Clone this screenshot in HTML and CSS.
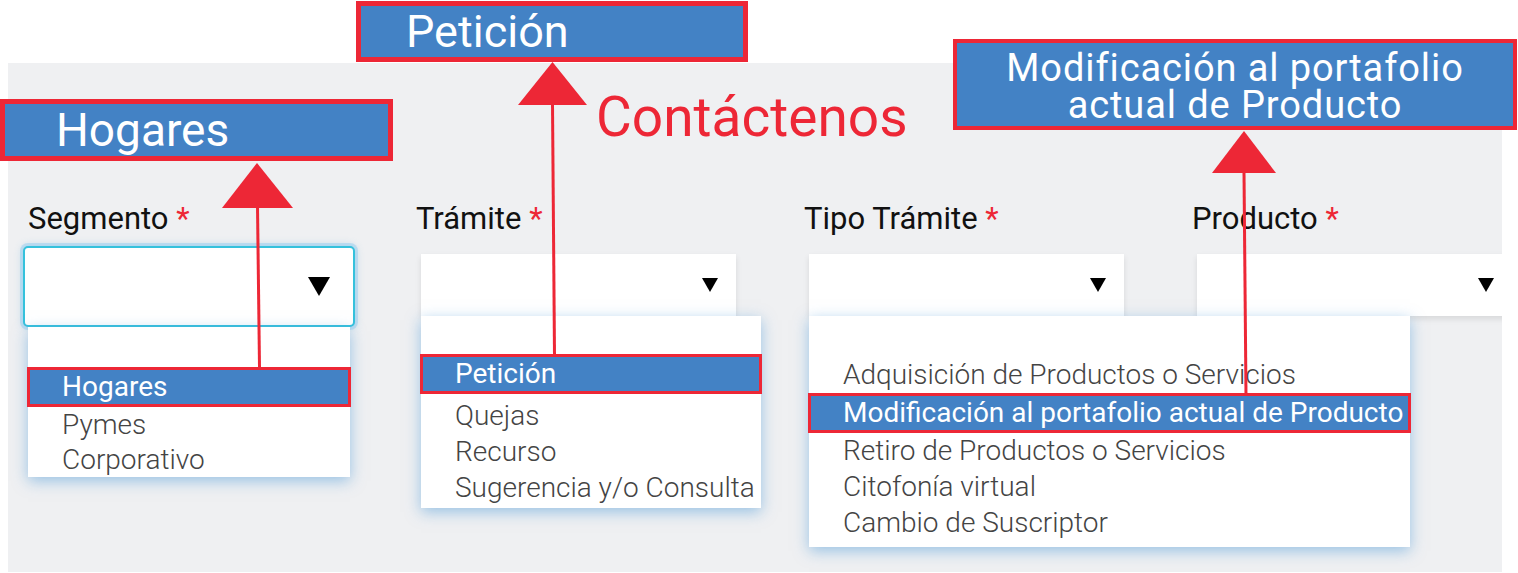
FILE: index.html
```html
<!DOCTYPE html>
<html lang="es">
<head>
<meta charset="utf-8">
<title>Contáctenos</title>
<link rel="stylesheet" href="styles.css">
</head>
<body>
<div class="page">
  <section class="panel">
    <div class="field field--segmento">
      <span class="field__label">Segmento <b class="req">*</b></span>
      <div class="dropdown">
        <div class="select select--focus">
          <svg class="caret caret--lg" viewBox="0 0 22 19"><polygon points="0,0 22,0 11,19"/></svg>
        </div>
        <ul class="menu menu--segmento">
          <li class="menu__item menu__item--active">Hogares</li>
          <li class="menu__item">Pymes</li>
          <li class="menu__item">Corporativo</li>
        </ul>
      </div>
    </div>
    <div class="field field--tramite">
      <span class="field__label">Trámite <b class="req">*</b></span>
      <div class="dropdown">
        <div class="select">
          <svg class="caret" viewBox="0 0 16 14"><polygon points="0,0 16,0 8,14"/></svg>
        </div>
        <ul class="menu menu--tramite">
          <li class="menu__item menu__item--active">Petición</li>
          <li class="menu__item">Quejas</li>
          <li class="menu__item">Recurso</li>
          <li class="menu__item">Sugerencia y/o Consulta</li>
        </ul>
      </div>
    </div>
    <div class="field field--tipo">
      <span class="field__label">Tipo Trámite <b class="req">*</b></span>
      <div class="dropdown">
        <div class="select">
          <svg class="caret" viewBox="0 0 16 14"><polygon points="0,0 16,0 8,14"/></svg>
        </div>
        <ul class="menu menu--tipo">
          <li class="menu__item">Adquisición de Productos o Servicios</li>
          <li class="menu__item menu__item--active">Modificación al portafolio actual de Producto</li>
          <li class="menu__item">Retiro de Productos o Servicios</li>
          <li class="menu__item">Citofonía virtual</li>
          <li class="menu__item">Cambio de Suscriptor</li>
        </ul>
      </div>
    </div>
    <div class="field field--producto">
      <span class="field__label">Producto <b class="req">*</b></span>
      <div class="dropdown">
        <div class="select">
          <svg class="caret" viewBox="0 0 16 14"><polygon points="0,0 16,0 8,14"/></svg>
        </div>
      </div>
    </div>
  </section>

  <div class="callout callout--segmento">Hogares</div>
  <div class="callout callout--tramite">Petición</div>
  <p class="caption">Contáctenos</p>
  <div class="callout callout--tipo">
    <span class="callout__line">Modificación al portafolio</span>
    <span class="callout__line">actual de Producto</span>
  </div>

  <svg class="pointers" width="1518" height="573" viewBox="0 0 1518 573">
    <g fill="#ed2736">
      <polygon points="257,163 222,208 293,208"/>
      <polygon points="552.5,62 518,105 587,105"/>
      <polygon points="1244,131 1212,173 1276,173"/>
    </g>
    <g stroke="#ed2736" stroke-width="3" fill="none">
      <line x1="257.5" y1="206" x2="259.5" y2="367"/>
      <line x1="552.5" y1="104" x2="554.5" y2="355"/>
      <line x1="1244" y1="172" x2="1246" y2="396"/>
    </g>
  </svg>
</div>
</body>
</html>
```

FILE: styles.css
```css
* {
  box-sizing: border-box;
}

html,
body {
  margin: 0;
  padding: 0;
}

body {
  background: #fff;
  font-family: Roboto, "Noto Sans", "Liberation Sans", sans-serif;
}

.page {
  position: relative;
  width: 1518px;
  height: 573px;
  padding: 63px 0 0 8px;
  overflow: hidden;
}

/* form panel */
.panel {
  width: 1494px;
  height: 509px;
  background: #eff0f2;
  display: flex;
  padding: 138px 0 0 20px;
  overflow: hidden;
}

.field {
  flex: 0 0 388px;
  display: flex;
  flex-direction: column;
  align-items: flex-start;
}

.field__label {
  font-size: 31px;
  line-height: 36px;
  color: #111;
}

.req {
  font-weight: 400;
  color: #ed2736;
}

.dropdown {
  position: relative;
  margin: 17px 0 0 5px;
}

.field--segmento .dropdown {
  margin: 9px 0 0 -5px;
}

.select {
  width: 315px;
  height: 62px;
  background: #fff;
  display: flex;
  align-items: center;
  justify-content: flex-end;
  padding-right: 18px;
  box-shadow: 0 3px 6px rgba(0, 0, 0, 0.1);
}

.select--focus {
  width: 332px;
  height: 81px;
  border: 2px solid #35c1dc;
  border-radius: 5px;
  padding-right: 23px;
  box-shadow: 0 0 0 3px rgba(150, 205, 240, 0.5), 0 0 9px rgba(90, 170, 220, 0.45);
}

.caret {
  width: 16px;
  height: 14px;
  fill: #000;
}

.caret--lg {
  width: 22px;
  height: 19px;
}

/* option lists */
.menu {
  position: absolute;
  top: 100%;
  left: 0;
  z-index: 2;
  margin: 0;
  list-style: none;
  background: #fff;
  box-shadow: 0 4px 14px rgba(80, 155, 215, 0.55);
  font-size: 28px;
  font-weight: 300;
  color: #444;
}

.menu__item {
  line-height: 36px;
  padding-left: 34px;
  white-space: nowrap;
}

.menu__item--active {
  margin: 0 -1px;
  padding-left: 32px;
  line-height: 34px;
  background: #4382c5;
  border: 3px solid #ed2736;
  color: #fff;
  font-weight: 400;
}

.menu--segmento {
  left: 5px;
  width: 322px;
  padding: 40px 0 0;
}

.menu--segmento .menu__item:not(.menu__item--active) {
  line-height: 35px;
}

.menu--tramite {
  width: 340px;
  padding: 38px 0 2px;
}

.menu--tramite .menu__item--active {
  margin-bottom: 4px;
}

.menu--tipo {
  width: 601px;
  padding: 41px 0 6px;
}

/* annotation boxes */
.callout {
  position: absolute;
  z-index: 4;
  background: #4382c5;
  color: #fff;
  border: 5px solid #ed2736;
  white-space: nowrap;
}

.callout--segmento {
  left: 0;
  top: 99px;
  width: 393px;
  height: 62px;
  font-size: 46px;
  line-height: 52px;
  padding-left: 51px;
}

.callout--tramite {
  left: 356px;
  top: 1px;
  width: 392px;
  height: 61px;
  font-size: 45px;
  line-height: 51px;
  padding-left: 45px;
}

.callout--tipo {
  left: 953px;
  top: 39px;
  width: 564px;
  height: 91px;
  border-width: 4px;
  display: flex;
  flex-direction: column;
  align-items: center;
  padding-top: 7px;
  font-size: 38px;
  letter-spacing: 0.9px;
}

.callout__line {
  display: block;
  height: 37px;
  line-height: 37px;
}

.caption {
  position: absolute;
  z-index: 4;
  left: 596px;
  top: 90px;
  margin: 0;
  font-size: 55px;
  line-height: 55px;
  color: #ed2736;
}

.pointers {
  position: absolute;
  left: 0;
  top: 0;
  z-index: 5;
  pointer-events: none;
}
```
